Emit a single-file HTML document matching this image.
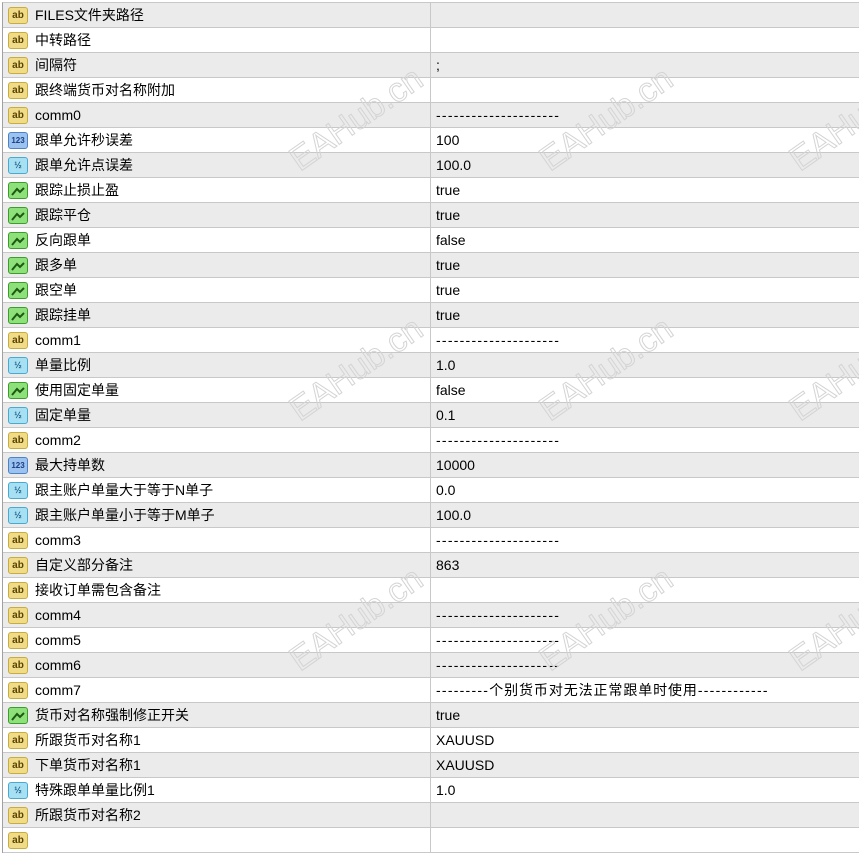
<!DOCTYPE html>
<html><head><meta charset="utf-8"><style>
*{margin:0;padding:0;box-sizing:border-box}
body{width:859px;height:834px;overflow:hidden;background:#fff;font-family:"Liberation Sans","Noto Sans CJK SC",sans-serif;font-size:14px;color:#000;position:relative}
#t{position:absolute;left:2px;top:2px;width:857px;border-top:1px solid #c8c8c8;border-left:1px solid #a0a0a0}
.r{height:25px;border-bottom:1px solid #c8c8c8;display:flex;position:relative}
.r:nth-child(odd){background:#ebebeb}
.n{width:428px;border-right:1px solid #c8c8c8;position:relative;padding-left:32px;line-height:24px;white-space:nowrap}
.v{padding-left:5px;line-height:24px;white-space:nowrap}
.d{letter-spacing:1.25px}
.i{position:absolute;left:5px;top:4px;width:20px;height:17px;border-radius:3px;font-size:10px;font-weight:bold;line-height:15px;text-align:center}
.ab{background:#f0dc88;border:1px solid #c9ac3f;color:#5a4200}
.nb{background:#9cc3ef;border:1px solid #4d82c4;color:#1c3f86;font-size:8px}
.fr{background:#a7e0f2;border:1px solid #4aa9cf;color:#1b5e8a;font-size:9px}
.bo{background:#8ee07a;border:1px solid #3d9d2c}
.wm{position:absolute;font-size:34px;color:transparent;-webkit-text-stroke:1px #d4d4d4;transform:rotate(-35deg);font-family:"Liberation Sans",sans-serif;pointer-events:none;white-space:nowrap}
</style></head><body>
<div id="t">
<div class="r"><div class="n"><span class="i ab">ab</span>FILES文件夹路径</div><div class="v"></div></div>
<div class="r"><div class="n"><span class="i ab">ab</span>中转路径</div><div class="v"></div></div>
<div class="r"><div class="n"><span class="i ab">ab</span>间隔符</div><div class="v">;</div></div>
<div class="r"><div class="n"><span class="i ab">ab</span>跟终端货币对名称附加</div><div class="v"></div></div>
<div class="r"><div class="n"><span class="i ab">ab</span>comm0</div><div class="v d">---------------------</div></div>
<div class="r"><div class="n"><span class="i nb">123</span>跟单允许秒误差</div><div class="v">100</div></div>
<div class="r"><div class="n"><span class="i fr">½</span>跟单允许点误差</div><div class="v">100.0</div></div>
<div class="r"><div class="n"><span class="i bo"><svg width="18" height="15"><path d="M3 12 L8 6 L11 9 L15 5" stroke="#1d5a12" stroke-width="2" fill="none"/></svg></span>跟踪止损止盈</div><div class="v">true</div></div>
<div class="r"><div class="n"><span class="i bo"><svg width="18" height="15"><path d="M3 12 L8 6 L11 9 L15 5" stroke="#1d5a12" stroke-width="2" fill="none"/></svg></span>跟踪平仓</div><div class="v">true</div></div>
<div class="r"><div class="n"><span class="i bo"><svg width="18" height="15"><path d="M3 12 L8 6 L11 9 L15 5" stroke="#1d5a12" stroke-width="2" fill="none"/></svg></span>反向跟单</div><div class="v">false</div></div>
<div class="r"><div class="n"><span class="i bo"><svg width="18" height="15"><path d="M3 12 L8 6 L11 9 L15 5" stroke="#1d5a12" stroke-width="2" fill="none"/></svg></span>跟多单</div><div class="v">true</div></div>
<div class="r"><div class="n"><span class="i bo"><svg width="18" height="15"><path d="M3 12 L8 6 L11 9 L15 5" stroke="#1d5a12" stroke-width="2" fill="none"/></svg></span>跟空单</div><div class="v">true</div></div>
<div class="r"><div class="n"><span class="i bo"><svg width="18" height="15"><path d="M3 12 L8 6 L11 9 L15 5" stroke="#1d5a12" stroke-width="2" fill="none"/></svg></span>跟踪挂单</div><div class="v">true</div></div>
<div class="r"><div class="n"><span class="i ab">ab</span>comm1</div><div class="v d">---------------------</div></div>
<div class="r"><div class="n"><span class="i fr">½</span>单量比例</div><div class="v">1.0</div></div>
<div class="r"><div class="n"><span class="i bo"><svg width="18" height="15"><path d="M3 12 L8 6 L11 9 L15 5" stroke="#1d5a12" stroke-width="2" fill="none"/></svg></span>使用固定单量</div><div class="v">false</div></div>
<div class="r"><div class="n"><span class="i fr">½</span>固定单量</div><div class="v">0.1</div></div>
<div class="r"><div class="n"><span class="i ab">ab</span>comm2</div><div class="v d">---------------------</div></div>
<div class="r"><div class="n"><span class="i nb">123</span>最大持单数</div><div class="v">10000</div></div>
<div class="r"><div class="n"><span class="i fr">½</span>跟主账户单量大于等于N单子</div><div class="v">0.0</div></div>
<div class="r"><div class="n"><span class="i fr">½</span>跟主账户单量小于等于M单子</div><div class="v">100.0</div></div>
<div class="r"><div class="n"><span class="i ab">ab</span>comm3</div><div class="v d">---------------------</div></div>
<div class="r"><div class="n"><span class="i ab">ab</span>自定义部分备注</div><div class="v">863</div></div>
<div class="r"><div class="n"><span class="i ab">ab</span>接收订单需包含备注</div><div class="v"></div></div>
<div class="r"><div class="n"><span class="i ab">ab</span>comm4</div><div class="v d">---------------------</div></div>
<div class="r"><div class="n"><span class="i ab">ab</span>comm5</div><div class="v d">---------------------</div></div>
<div class="r"><div class="n"><span class="i ab">ab</span>comm6</div><div class="v d">---------------------</div></div>
<div class="r"><div class="n"><span class="i ab">ab</span>comm7</div><div class="v"><span class="d">---------</span><span style="letter-spacing:0.9px">个别货币对无法正常跟单时使用</span><span class="d">------------</span></div></div>
<div class="r"><div class="n"><span class="i bo"><svg width="18" height="15"><path d="M3 12 L8 6 L11 9 L15 5" stroke="#1d5a12" stroke-width="2" fill="none"/></svg></span>货币对名称强制修正开关</div><div class="v">true</div></div>
<div class="r"><div class="n"><span class="i ab">ab</span>所跟货币对名称1</div><div class="v">XAUUSD</div></div>
<div class="r"><div class="n"><span class="i ab">ab</span>下单货币对名称1</div><div class="v">XAUUSD</div></div>
<div class="r"><div class="n"><span class="i fr">½</span>特殊跟单单量比例1</div><div class="v">1.0</div></div>
<div class="r"><div class="n"><span class="i ab">ab</span>所跟货币对名称2</div><div class="v"></div></div>
<div class="r"><div class="n"><span class="i ab">ab</span></div><div class="v"></div></div>
</div>
<div class="wm" style="left:280px;top:100px">EAHub.cn</div>
<div class="wm" style="left:530px;top:100px">EAHub.cn</div>
<div class="wm" style="left:780px;top:100px">EAHub.cn</div>
<div class="wm" style="left:280px;top:350px">EAHub.cn</div>
<div class="wm" style="left:530px;top:350px">EAHub.cn</div>
<div class="wm" style="left:780px;top:350px">EAHub.cn</div>
<div class="wm" style="left:280px;top:600px">EAHub.cn</div>
<div class="wm" style="left:530px;top:600px">EAHub.cn</div>
<div class="wm" style="left:780px;top:600px">EAHub.cn</div>
</body></html>
